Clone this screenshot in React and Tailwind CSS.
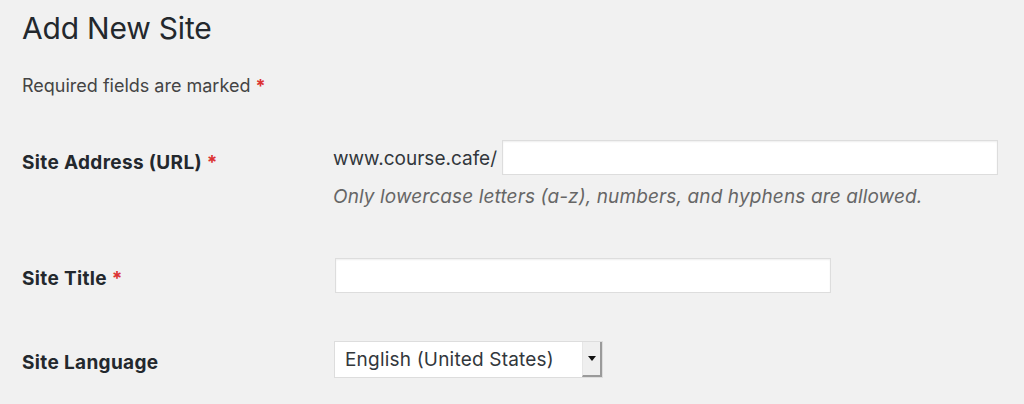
import React from "react";

const font = { fontFamily: "Inter, 'Liberation Sans', Arial, sans-serif" };

function Star() {
  return <span className="text-[#dc3232] font-bold">*</span>;
}

export default function App() {
  return (
    <div
      className="w-[1024px] h-[404px] bg-[#f1f1f1] pl-[22px] overflow-hidden text-[#23282d]"
      style={font}
    >
      <h1 className="pt-[10px] text-[30px] leading-[36px] font-normal text-[#23282d] tracking-[-0.2px]">
        Add New Site
      </h1>
      <p className="mt-[28px] text-[18px] leading-[24px] text-[#444]">
        Required fields are marked <Star />
      </p>

      {/* Site Address */}
      <div className="mt-[42px] flex">
        <div className="w-[311px] shrink-0 pt-[11px] text-[19px] leading-[24px] tracking-[0.35px] font-bold">
          Site Address (URL) <Star />
        </div>
        <div className="flex flex-col">
          <div className="flex items-start">
            <span className="pt-[7px] text-[19px] leading-[24px] text-[#32373c]">
              www.course.cafe/
            </span>
            <div className="ml-[5px] w-[496px] h-[35px] bg-white border border-[#dddddd] shadow-[inset_0_1px_2px_rgba(0,0,0,0.07)]" />
          </div>
          <p className="mt-[10px] text-[19px] leading-[24px] tracking-[0.12px] italic text-[#666]">
            Only lowercase letters (a-z), numbers, and hyphens are allowed.
          </p>
        </div>
      </div>

      {/* Site Title */}
      <div className="mt-[49px] flex">
        <div className="w-[311px] shrink-0 pt-[9px] text-[19px] leading-[24px] tracking-[0.35px] font-bold">
          Site Title <Star />
        </div>
        <div className="ml-[2px] w-[496px] h-[35px] bg-white border border-[#dddddd] shadow-[inset_0_1px_2px_rgba(0,0,0,0.07)]" />
      </div>

      {/* Site Language */}
      <div className="mt-[48px] flex">
        <div className="w-[311px] shrink-0 pt-[10px] text-[19px] leading-[24px] tracking-[0.35px] font-bold">
          Site Language
        </div>
        <div className="ml-[1px] w-[269px] h-[37px] bg-white border border-[#dddddd] flex items-stretch">
          <span className="flex-1 pl-[10px] pt-[6px] text-[19px] leading-[24px] tracking-[0.2px] text-[#32373c]">
            English (United States)
          </span>
          <div className="w-[20px] bg-[#efefef] border-l border-[#e6e6e6] border-r-2 border-b-2 border-r-[#9a9a9a] border-b-[#9a9a9a] flex items-center justify-center">
            <svg width="8" height="5" viewBox="0 0 8 5">
              <path d="M0 0 L8 0 L4 5 Z" fill="#111" />
            </svg>
          </div>
        </div>
      </div>
    </div>
  );
}
